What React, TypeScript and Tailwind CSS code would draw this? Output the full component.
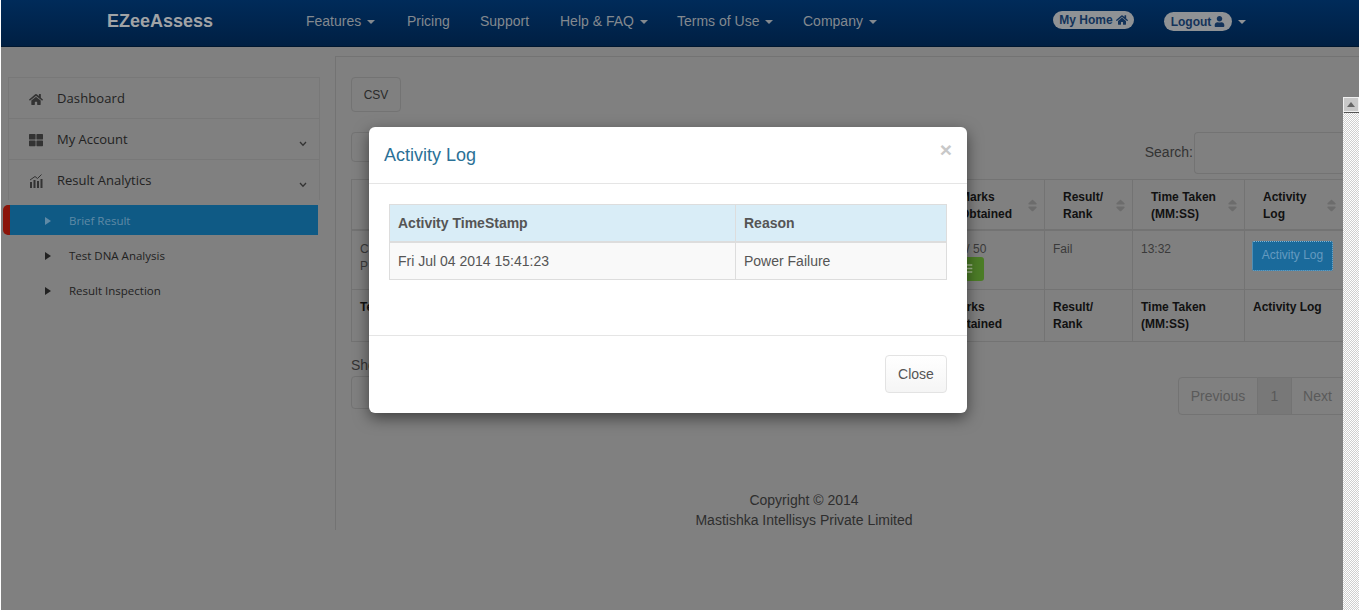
import { FaBars, FaHome, FaSort, FaThLarge, FaUser } from "react-icons/fa";

// fixed widths keep the links on the same x positions as the real navbar
const navLinks = [
  { label: "Features", caret: true, width: "w-[101px]" },
  { label: "Pricing", caret: false, width: "w-[73px]" },
  { label: "Support", caret: false, width: "w-[80px]" },
  { label: "Help & FAQ", caret: true, width: "w-[117px]" },
  { label: "Terms of Use", caret: true, width: "w-[126px]" },
  { label: "Company", caret: true, width: "w-[250px]" },
];

const subLinks = ["Test DNA Analysis", "Result Inspection"];

function Caret() {
  return <span className="ml-[6px] h-0 w-0 border-x-[4px] border-t-[4px] border-x-transparent border-t-current" />;
}

function SubArrow() {
  return <span className="h-0 w-0 border-y-[4px] border-l-[6px] border-y-transparent border-l-current" />;
}

function Chevron() {
  return (
    <svg width="8" height="6" viewBox="0 0 8 6" className="ml-auto mr-[12px] mt-[7px]" fill="none" stroke="#333" strokeWidth="1.3">
      <path d="M1 1 L4 4.2 L7 1" />
    </svg>
  );
}

function ChartIcon() {
  return (
    <svg width="14" height="14" viewBox="0 0 14 14" className="text-[#333]" fill="currentColor">
      <rect x="1" y="8" width="2" height="6" />
      <rect x="4.5" y="6" width="2" height="8" />
      <rect x="8" y="7" width="2" height="7" />
      <rect x="11.5" y="5" width="2" height="9" />
      <path d="M1 6 L6 2.5 L8.5 4.5 L12.5 0.5" fill="none" stroke="currentColor" strokeWidth="1" />
    </svg>
  );
}

function SortHead({ lines, width }: { lines: string[]; width: string }) {
  return (
    <th className={`${width} h-[50px] border border-b-2 border-[#737373] p-0 text-left font-bold`}>
      <div className="flex items-center justify-between pl-[18px] pr-[4px] pt-[3px]">
        <span>
          {lines.map((l) => (
            <span key={l} className="block">{l}</span>
          ))}
        </span>
        <FaSort className="text-[15px] text-[#6c6c6c]" />
      </div>
    </th>
  );
}

export default function App() {
  return (
    <div className="relative h-[612px] w-[1366px] overflow-hidden bg-white font-['Liberation_Sans',Arial,sans-serif]">
      <div className="relative ml-px h-[610px] w-[1358px] overflow-hidden bg-[#808080]">
        {/* Navbar */}
        <header className="flex h-[47px] items-center bg-gradient-to-b from-[#002b5a] to-[#001f42] pb-[4px] pl-[106px] shadow-[inset_0_-1px_0_#001730]">
          <div className="w-[199px] text-[18px] font-bold text-[#a0a3a6]">EZeeAssess</div>
          <nav className="flex text-[14px] text-[#83898f]">
            {navLinks.map((link) => (
              <span key={link.label} className={`flex items-center ${link.width}`}>
                {link.label}
                {link.caret && <Caret />}
              </span>
            ))}
          </nav>
          <div className="-mt-[3px] flex h-[18px] w-[81px] items-center justify-center gap-[3px] rounded-full bg-[#8f9295] text-[12px] font-bold text-[#13335a]">
            My Home <FaHome className="text-[12px]" />
          </div>
          <div className="ml-[30px] flex h-[19px] w-[68px] items-center justify-center gap-[3px] rounded-full bg-[#8f9295] text-[12px] font-bold text-[#13335a]">
            Logout <FaUser className="text-[11px]" />
          </div>
          <span className="ml-[6px] h-0 w-0 border-x-[4px] border-t-[4px] border-x-transparent border-t-[#8f9295]" />
        </header>

        <div className="mt-[9px] flex">
          {/* Sidebar */}
          <aside className="w-[334px] pl-[7px] pt-[21px] font-['Open_Sans',sans-serif] text-[#222]">
            <div className="w-[312px] border border-b-0 border-[#787878] text-[13px]">
              <div className="flex h-[41px] items-center border-b border-[#787878] pl-[20px] pt-[2px]">
                <FaHome className="w-[14px] text-[13px] text-[#333]" />
                <span className="ml-[14px] tracking-[0.1px]">Dashboard</span>
              </div>
              <div className="flex h-[41px] items-center border-b border-[#787878] pl-[20px] pt-[2px]">
                <FaThLarge className="w-[14px] text-[14px] text-[#333]" />
                <span className="ml-[14px]">My Account</span>
                <Chevron />
              </div>
              <div className="flex h-[40px] items-center pl-[20px] pt-[2px]">
                <ChartIcon />
                <span className="ml-[14px]">Result Analytics</span>
                <Chevron />
              </div>
            </div>
            <div className="-ml-[5px] mt-[5px] flex h-[30px] w-[315px] items-center rounded-l-[5px] border-l-[7px] border-[#8b1409] bg-[#0f5a85] pl-[35px] pt-[1px] text-[11.5px] text-[#5f8aa6]">
              <SubArrow />
              <span className="ml-[18px]">Brief Result</span>
            </div>
            <div className="mt-[3px] text-[11.5px]">
              {subLinks.map((link) => (
                <div key={link} className="flex h-[35px] items-center pl-[37px]">
                  <SubArrow />
                  <span className="ml-[18px]">{link}</span>
                </div>
              ))}
            </div>
          </aside>

          {/* Main panel */}
          <main className="h-[474px] w-[1024px] border-l border-t border-[#737373] pl-[15px] pr-[16px] pt-[20px] text-[12px]">
            <button className="h-[35px] w-[50px] rounded border border-[#737373] text-[12px] text-[#2a2a2a]">CSV</button>

            <div className="mt-[20px] flex h-[42px] justify-between">
              <div className="h-[30px] w-[60px] rounded border border-[#737373]" />
              <div className="flex items-center text-[14px] text-[#333]">
                <span className="-mt-[2px] mr-px">Search:</span>
                <div className="h-[42px] w-[149px] rounded-l border border-r-0 border-[#737373]" />
              </div>
            </div>

            <table className="mt-[5px] w-[992px] table-fixed border-collapse leading-[17px] text-[#111]">
              <thead>
                <tr>
                  <th className="w-[590px] border border-b-2 border-[#737373] pl-[18px] text-left font-bold">Test</th>
                  <SortHead lines={["Marks", "Obtained"]} width="w-[103px]" />
                  <SortHead lines={["Result/", "Rank"]} width="w-[88px]" />
                  <SortHead lines={["Time Taken", "(MM:SS)"]} width="w-[112px]" />
                  <SortHead lines={["Activity", "Log"]} width="w-[99px]" />
                </tr>
              </thead>
              <tbody className="text-[#3a3a3a]">
                <tr className="h-[58px] align-top">
                  <td className="border border-[#737373] p-[8px] pt-[10px]">C<br />P</td>
                  <td className="border border-[#737373] p-[8px] pl-[11px] pt-[10px]">
                    27/ 50
                    <div className="-mt-px flex h-[24px] w-[31px] items-center justify-end rounded-[3px] bg-[#4c7d27] pr-[11px] text-[#a3b88f]">
                      <FaBars className="text-[11px]" />
                    </div>
                  </td>
                  <td className="border border-[#737373] p-[8px] pt-[10px]">Fail</td>
                  <td className="border border-[#737373] p-[8px] pt-[10px]">13:32</td>
                  <td className="border border-[#737373] p-[8px] pl-[7px] pt-[10px]">
                    <div className="flex h-[30px] w-[81px] items-center justify-center rounded-[2px] border border-dotted border-[#83b4d2] bg-[#1a6a9b] text-[#659ac0]">
                      Activity Log
                    </div>
                  </td>
                </tr>
              </tbody>
              <tfoot>
                <tr className="h-[51px] align-top font-bold">
                  <td className="border border-[#737373] p-[8px] pt-[9px]">Test</td>
                  <td className="border border-[#737373] p-[8px] pt-[9px]">Marks<br />Obtained</td>
                  <td className="border border-[#737373] p-[8px] pt-[9px]">Result/<br />Rank</td>
                  <td className="border border-[#737373] p-[8px] pt-[9px]">Time Taken<br />(MM:SS)</td>
                  <td className="border border-[#737373] p-[8px] pt-[9px]">Activity Log</td>
                </tr>
              </tfoot>
            </table>

            <div className="mt-[13px] flex justify-between">
              <div>
                <div className="text-[14px] leading-[20px] text-[#333]">Showing</div>
                <div className="mt-px h-[33px] w-[60px] rounded border border-[#737373]" />
              </div>
              <div className="mt-[22px] flex h-[38px] text-[14px] text-[#5a5a5a]">
                <div className="flex w-[80px] items-center justify-center rounded-l border border-[#737373] pt-px">Previous</div>
                <div className="flex w-[33px] items-center justify-center border-y border-[#737373] bg-[#787878] pt-px">1</div>
                <div className="flex w-[52px] items-center justify-center border border-r-0 border-[#737373] pt-px">Next</div>
              </div>
            </div>

            <div className="mt-[75px] w-[906px] text-center text-[14px] leading-[20px] text-[#2e2e2e]">
              <div>Copyright © 2014</div>
              <div>Mastishka Intellisys Private Limited</div>
            </div>
          </main>
        </div>

        {/* Modal scrollbar */}
        <div className="absolute bottom-0 right-0 top-[97px] w-[16px] bg-[repeating-conic-gradient(#cfcfcf_0_25%,#ffffff_0_50%)] bg-[length:2px_2px]">
          <div className="flex h-[15px] w-[16px] items-center justify-center border border-[#f0f0f0] bg-[#c8c8c8] shadow-[1px_1px_0_#555]">
            <div className="h-0 w-0 border-x-[4px] border-b-[5px] border-x-transparent border-b-[#666]" />
          </div>
        </div>

        {/* Activity log modal */}
        <div className="absolute left-[368px] top-[127px] h-[286px] w-[598px] rounded-[6px] bg-white shadow-[0_5px_15px_rgba(0,0,0,0.5)]">
          <div className="flex h-[57px] items-start justify-between border-b border-[#e5e5e5] pl-[15px] pr-[15px]">
            <h4 className="mt-[18px] text-[18px] leading-[20px] text-[#2b7197]">Activity Log</h4>
            <span className="mt-[12px] text-[21px] font-bold leading-[21px] text-[#c8c8c8]">×</span>
          </div>
          <div className="h-[151px] p-[20px]">
            <table className="w-[558px] table-fixed border-collapse text-[14px] text-[#555]">
              <thead>
                <tr className="h-[37px] bg-[#d9edf7] text-left">
                  <th className="w-[346px] border border-b-2 border-[#ddd] pl-[8px] pt-px font-bold">Activity TimeStamp</th>
                  <th className="border border-b-2 border-[#ddd] pl-[8px] pt-px font-bold">Reason</th>
                </tr>
              </thead>
              <tbody>
                <tr className="h-[38px] bg-[#f9f9f9]">
                  <td className="border border-[#ddd] pl-[8px] pt-px">Fri Jul 04 2014 15:41:23</td>
                  <td className="border border-[#ddd] pl-[8px] pt-px">Power Failure</td>
                </tr>
              </tbody>
            </table>
          </div>
          <div className="flex h-[78px] justify-end border-t border-[#e5e5e5] pr-[20px] pt-[19px]">
            <button className="h-[38px] w-[62px] rounded border border-[#e3e3e3] bg-gradient-to-b from-white to-[#f5f5f5] text-[14px] text-[#555]">Close</button>
          </div>
        </div>
      </div>
    </div>
  );
}
